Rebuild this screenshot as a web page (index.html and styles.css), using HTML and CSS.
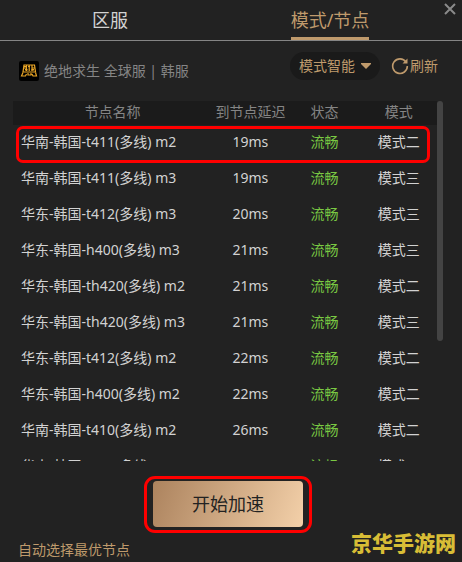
FILE: index.html
```html
<!DOCTYPE html>
<html lang="zh-CN">

<head>
  <meta charset="UTF-8">
  <title>模式/节点</title>
  <link rel="stylesheet" href="styles.css">
</head>

<body>
  <div class="app">
    <!-- 顶部标签 -->
    <nav class="tabs">
      <a class="tab" href="#"><span>区服</span></a>
      <a class="tab active" href="#"><span>模式/节点</span></a>
      <button class="close" type="button" aria-label="关闭">
        <svg width="12" height="12" viewBox="0 0 12 12">
          <path d="M1 1L11 11M11 1L1 11" stroke="#8a8a8a" stroke-width="2" />
        </svg>
      </button>
    </nav>

    <!-- 当前游戏 -->
    <div class="toolbar">
      <div class="game">
        <svg class="logo" width="20" height="20" viewBox="0 0 20 20">
          <rect width="20" height="20" rx="2" fill="#000" />
          <g fill="none" stroke="#e9a526" stroke-width="1.200">
            <path d="M5 4H15.500L16.500 11H4Z" />
            <path d="M7.500 4V10M10.200 4V10M13 4V10M5 7H7M13 7H16" />
            <path d="M4 11.500L2.500 15H6.500L7.500 13M9 12V14H12V12M13 13L14 15H17.500L16.500 11.500" />
          </g>
          <path d="M5 5H7V6H5ZM9 5H11V6H9ZM6 8H8.500V9.500H6ZM12.500 8H15V9.500H12.500Z" fill="#e9a526" />
        </svg>
        <span>绝地求生 全球服 | 韩服</span>
      </div>
      <button class="mode" type="button">
        模式智能
        <svg width="10" height="6" viewBox="0 0 10 6">
          <path d="M0 0H10V1L5 6L0 1Z" fill="#bf9a6c" />
        </svg>
      </button>
      <button class="refresh" type="button">
        <svg width="18" height="18" viewBox="0 0 18 18">
          <path d="M15 5A7.300 7.300 0 1 0 16.300 9" fill="none" stroke="#bf9a6c" stroke-width="1.600" />
          <path d="M16.500 1.500V6.500H11.500Z" fill="#bf9a6c" />
        </svg>
        刷新
      </button>
    </div>

    <!-- 节点列表 -->
    <div class="list">
      <table class="nodes">
        <thead>
          <tr>
            <th class="col-name">节点名称</th>
            <th class="col-delay">到节点延迟</th>
            <th class="col-state">状态</th>
            <th class="col-mode">模式</th>
          </tr>
        </thead>
        <tbody>
          <tr class="marked">
            <td>华南-韩国-t411(多线) m2</td>
            <td>19ms</td>
            <td>流畅</td>
            <td>模式二</td>
          </tr>
          <tr>
            <td>华南-韩国-t411(多线) m3</td>
            <td>19ms</td>
            <td>流畅</td>
            <td>模式三</td>
          </tr>
          <tr>
            <td>华东-韩国-t412(多线) m3</td>
            <td>20ms</td>
            <td>流畅</td>
            <td>模式三</td>
          </tr>
          <tr>
            <td>华东-韩国-h400(多线) m3</td>
            <td>21ms</td>
            <td>流畅</td>
            <td>模式三</td>
          </tr>
          <tr>
            <td>华东-韩国-th420(多线) m2</td>
            <td>21ms</td>
            <td>流畅</td>
            <td>模式二</td>
          </tr>
          <tr>
            <td>华东-韩国-th420(多线) m3</td>
            <td>21ms</td>
            <td>流畅</td>
            <td>模式三</td>
          </tr>
          <tr>
            <td>华东-韩国-t412(多线) m2</td>
            <td>22ms</td>
            <td>流畅</td>
            <td>模式二</td>
          </tr>
          <tr>
            <td>华东-韩国-h400(多线) m2</td>
            <td>22ms</td>
            <td>流畅</td>
            <td>模式二</td>
          </tr>
          <tr>
            <td>华南-韩国-t410(多线) m2</td>
            <td>26ms</td>
            <td>流畅</td>
            <td>模式二</td>
          </tr>
          <tr>
            <td>华南-韩国-t410(多线) m3</td>
            <td>26ms</td>
            <td>流畅</td>
            <td>模式三</td>
          </tr>
        </tbody>
      </table>
      <div class="scrollbar"></div>
    </div>

    <!-- 底部 -->
    <div class="footer">
      <div class="start-box">
        <button class="start" type="button">开始加速</button>
      </div>
      <div class="bottom">
        <a class="auto" href="#">自动选择最优节点</a>
        <span class="watermark">京华手游网</span>
      </div>
    </div>
  </div>
</body>

</html>
```
FILE: styles.css
```css
* {
  box-sizing: border-box;
}

body {
  margin: 0;
  background: #222;
  color: #d2d2d2;
  font: 14px/20px "Noto Sans", "Noto Sans CJK SC", sans-serif;
}

a {
  text-decoration: none;
}

button {
  padding: 0;
  border: 0;
  background: none;
  color: #bf9a6c;
  font: inherit;
  cursor: pointer;
}

.app {
  position: relative;
  display: flex;
  flex-direction: column;
  height: 100vh;
  overflow: hidden;
}

/* 顶部标签 */
.tabs {
  display: flex;
  padding-right: 22px;
  border-bottom: 1px solid #858585;
}

.tab {
  flex: 1;
  display: flex;
  justify-content: center;
  color: #d2d2d2;
  font-size: 18px;
  line-height: 40px;
}

.tab span {
  height: 40px;
}

.tab.active span {
  border-bottom: 3px solid #bf9a6c;
  color: #bf9a6c;
}

.close {
  position: absolute;
  top: 3px;
  right: 6px;
  width: 12px;
  height: 12px;
}

.close svg {
  display: block;
}

/* 当前游戏 */
.toolbar {
  display: flex;
  align-items: center;
  height: 60px;
  padding: 0 24px 10px 19px;
}

.game {
  flex: 1;
  display: flex;
  align-items: center;
  gap: 5px;
  padding-top: 10px;
  color: #858585;
}

.mode {
  display: flex;
  align-items: center;
  gap: 6px;
  height: 28px;
  margin-right: 11px;
  padding: 0 9px;
  border-radius: 14px;
  background: #1a1a1a;
}

.refresh {
  display: flex;
  align-items: center;
  gap: 1px;
}

/* 节点列表 */
.list {
  flex: 1;
  display: flex;
  min-height: 0;
  padding: 0 19px 0 13px;
  overflow: hidden;
}

.nodes {
  flex: 1;
  align-self: flex-start;
  border-collapse: collapse;
  table-layout: fixed;
}

.nodes th {
  height: 24px;
  padding: 0 0 2px;
  background: #1b1b1b;
  color: #858585;
  font-weight: normal;
}

.nodes td {
  height: 36px;
  padding: 0 0 2px;
  text-align: center;
  white-space: nowrap;
}

.nodes td:first-child {
  padding-left: 8px;
  text-align: left;
}

.nodes td:nth-child(3) {
  color: #7ac943;
}

.col-name {
  width: 47%;
}

.col-delay {
  width: 18%;
}

.col-state {
  width: 17%;
}

.marked {
  position: relative;
}

.marked td:last-child::after {
  content: "";
  position: absolute;
  top: 1px;
  right: 7px;
  bottom: -2px;
  left: 3px;
  border: 3px solid #f00;
  border-radius: 7px;
}

.scrollbar {
  width: 6px;
  height: 240px;
  border-radius: 3px;
  background: #444;
}

/* 底部 */
.footer {
  display: flex;
  flex-direction: column;
  padding: 15px 6px 0 18px;
}

.start-box {
  align-self: center;
  margin-right: 18px;
  padding: 2px 6px 3px;
  border: 3px solid #f00;
  border-radius: 11px;
}

.start {
  display: block;
  width: 150px;
  height: 46px;
  border-radius: 4px;
  background: linear-gradient(110deg, #ac835e, #f3d0a9);
  color: #222;
  font-size: 18px;
}

.bottom {
  display: flex;
  justify-content: space-between;
  align-items: flex-end;
  height: 29px;
}

.auto {
  padding-bottom: 2px;
  color: #bf9a6c;
}

.watermark {
  padding-bottom: 6px;
  color: #d8bd36;
  font-family: "Noto Sans CJK SC", sans-serif;
  font-size: 21px;
  font-weight: 900;
  line-height: 28px;
}
```
